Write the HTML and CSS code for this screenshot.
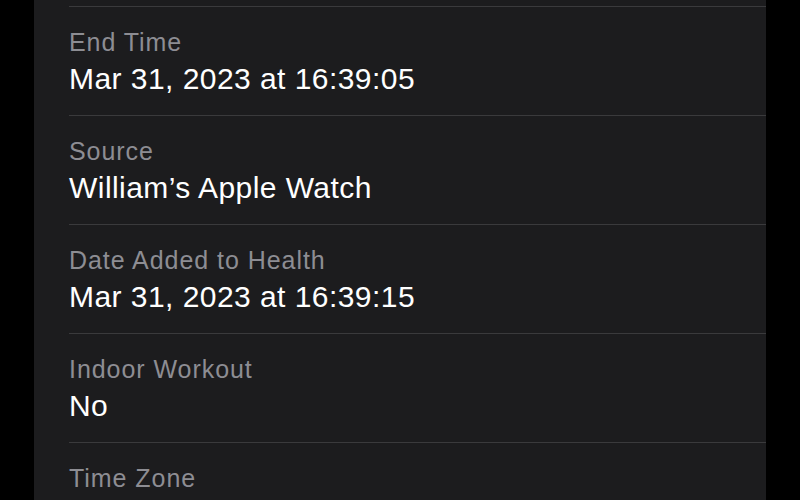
FILE: index.html
```
<!DOCTYPE html>
<html lang="en">
<head>
<meta charset="utf-8">
<title>Workout Details</title>
<link rel="stylesheet" href="styles.css">
</head>
<body>
<div class="screen">
  <div class="panel">
    <div class="list">
      <div class="row">
        <div class="label">End Time</div>
        <div class="value">Mar 31, 2023 at 16:39:05</div>
      </div>
      <div class="row">
        <div class="label">Source</div>
        <div class="value">William’s Apple Watch</div>
      </div>
      <div class="row">
        <div class="label">Date Added to Health</div>
        <div class="value">Mar 31, 2023 at 16:39:15</div>
      </div>
      <div class="row">
        <div class="label">Indoor Workout</div>
        <div class="value">No</div>
      </div>
      <div class="row">
        <div class="label">Time Zone</div>
      </div>
    </div>
  </div>
</div>
</body>
</html>
```
FILE: styles.css
```
html, body {
  margin: 0;
  padding: 0;
  background: #000;
  height: 100%;
  overflow: hidden;
}

.screen {
  display: flex;
  justify-content: flex-start;
  height: 500px;
  padding-left: 34px;
}

.panel {
  width: 732px;
  height: 500px;
  background: #1c1c1e;
  overflow: hidden;
  font-family: "Liberation Sans", Arial, sans-serif;
}

.list {
  padding-top: 6px;
  padding-left: 35px;
}

.row {
  border-top: 1px solid #3a3a3c;
  padding: 20px 0 16px 0;
}

.label {
  font-size: 25px;
  line-height: 31px;
  color: #8d8d93;
  letter-spacing: 0.95px;
}

.value {
  font-size: 30px;
  line-height: 40px;
  padding-top: 1px;
  color: #ffffff;
  letter-spacing: 0.45px;
}
```
